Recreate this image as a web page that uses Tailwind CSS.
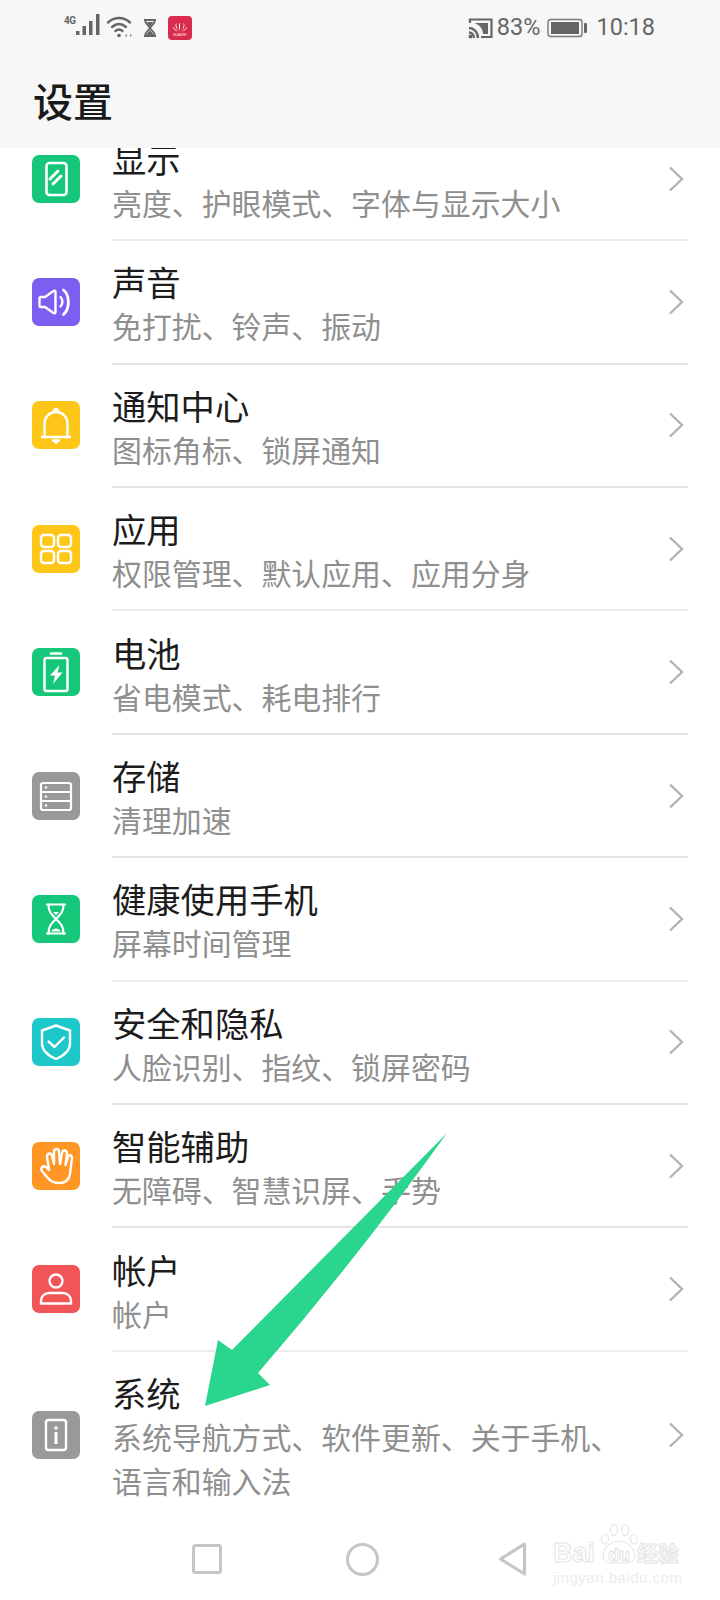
<!DOCTYPE html>
<html lang="zh-CN">
<head>
<meta charset="utf-8">
<script src="https://cdn.jsdelivr.net/npm/@tailwindcss/browser@4"></script>
</head>
<body class="bg-white">
<div class="relative w-[720px] h-[1600px] flex flex-col overflow-hidden bg-white font-['Noto_Sans_CJK_SC','Noto_Sans',sans-serif] text-[#1c1c1c]">

  <header class="relative z-10 h-[148px] shrink-0 bg-[#f7f7f7] flex flex-col">
    <div class="h-[54px] flex items-center pl-[64px] pr-[65px] pt-[1px] text-[#666]">
      <span class="font-['Roboto'] font-bold text-[11px] leading-none mb-[15px] w-[13px] tracking-[-0.5px] scale-x-90 origin-left">4G</span>
      <svg class="w-[24px] h-[24px] -ml-[1px] -mt-[3px]" viewBox="0 0 24 24" fill="#666"><rect x="0" y="17" width="3.500" height="4"/><rect x="6.500" y="12" width="3.500" height="9"/><rect x="13" y="7" width="3.500" height="14"/><rect x="20" y="0" width="3.500" height="21"/></svg>
      <svg class="w-[28px] h-[24px] ml-[6px] -mt-[1px]" viewBox="0 0 28 24" fill="none" stroke="#666" stroke-width="2.400" stroke-linecap="round"><path d="M2 7.500c6.500-6 15.500-6 22 0"/><path d="M6 12c4.500-4 9.500-4 14 0"/><path d="M9.500 16c2.500-2 4.500-2 7 0"/><circle cx="13" cy="20.500" r="1.800" fill="#666" stroke="none"/><path d="M19 20.500l2-1.500v3zM24 19l2 1.500-2 1.500z" fill="#888" stroke="none"/></svg>
      <svg class="w-[14px] h-[18px] ml-[9px]" viewBox="0 0 14 18" fill="none" stroke="#666" stroke-width="1.800"><path d="M1 1h12M1 17h12"/><path d="M2.500 1.500v2L11.500 14.500v2M11.500 1.500v2L2.500 14.500v2"/><path d="M3.500 3h7L7 8zM7 11l-4 5h8z" fill="#666" stroke="none"/></svg>
      <div class="w-[24px] h-[24px] ml-[11px] rounded-[4px] bg-[#d92b4c] flex items-center justify-center">
        <svg class="w-[24px] h-[24px]" viewBox="0 0 24 24" fill="#fff"><path d="M12 15V6.500c-1.500 1.500-1.500 5 0 8.500zM11 15C8.500 13 8 9 8.500 7c-1.500 1-1.500 5 2.500 8zM13 15c2.500-2 3-6 2.500-8 1.500 1 1.500 5-2.500 8zM10.500 15.500C8 15 6 12.500 5.500 10.500c-.8 1.800 1.500 4.800 5 5zM13.500 15.500c2.500-.5 4.500-3 5-5 .8 1.800-1.500 4.800-5 5z"/><text x="12" y="20" text-anchor="middle" font-size="3" font-family="Liberation Sans" letter-spacing=".3">HUAWEI</text></svg>
      </div>
      <div class="flex-1"></div>
      <svg class="w-[25px] h-[22px]" viewBox="0 0 25 22" fill="none" stroke="#666" stroke-width="2.200"><path d="M2 6V2.500h21.500V20H13"/><path d="M1 11c4.500 0 9 4 9 10M1 15.500c3 0 5 2.500 5 5.500" stroke-width="2.400"/><circle cx="2.500" cy="19.500" r="2" fill="#666" stroke="none"/><path d="M6 6h14v11h-5c0-5-4-10-9-11z" fill="#666" stroke="none"/></svg>
      <span class="font-['Roboto'] text-[23.500px] leading-none ml-[4px]">83%</span>
      <svg class="w-[41px] h-[20px] ml-[7px]" viewBox="0 0 41 20" fill="none"><rect x="1" y="1.500" width="34" height="17" rx="2.500" stroke="#777" stroke-width="1.400"/><rect x="4" y="4" width="28" height="12" fill="#666"/><rect x="37" y="5" width="3" height="10" rx="1" fill="#666"/></svg>
      <span class="font-['Roboto'] text-[23.500px] leading-none ml-[8px]">10:18</span>
    </div>
    <h1 class="mt-[20px] pl-[33px] text-[40px] leading-[52px] font-medium text-[#1a1a1a]">设置</h1>
  </header>

  <main class="flex-1 min-h-0 flex flex-col">
    <div class="-mt-[30.1px] h-[123.4px] shrink-0 flex items-stretch pl-[32px]">
      <div class="w-[48px] self-center mt-[-2px] shrink-0 h-[48px] rounded-[7px] bg-[#16c77a] flex items-center justify-center">
        <svg class="w-[48px] h-[48px]" viewBox="0 0 48 48" fill="none" stroke="#fff" stroke-width="2.600" stroke-linecap="round"><rect x="14.500" y="8" width="20" height="32" rx="3"/><path d="M18 24l8-8M21 29l8-8" stroke-width="3"/></svg>
      </div>
      <div class="ml-[32px] mr-[32px] flex-1 border-b-2 border-[#ececec] flex items-center justify-between">
        <div class="pt-[3px]"><div class="text-[34.300px] leading-[44px]">显示</div><div class="text-[29.900px] leading-[44px] text-[#8f8f8f]">亮度、护眼模式、字体与显示大小</div></div>
        <svg class="w-[16px] h-[26px] mr-[4px]" viewBox="0 0 16 26" fill="none" stroke="#b3b3b3" stroke-width="2.400"><path d="M2 1.500l12 11.500-12 11.500"/></svg>
      </div>
    </div>

    <div class="h-[123.4px] shrink-0 flex items-stretch pl-[32px]">
      <div class="w-[48px] self-center mt-[-2px] shrink-0 h-[48px] rounded-[7px] bg-[#7b5ff0] flex items-center justify-center">
        <svg class="w-[48px] h-[48px]" viewBox="0 0 48 48" fill="none" stroke="#fff" stroke-width="2.400" stroke-linecap="round" stroke-linejoin="round"><path d="M7.500 20.500c0-1 .5-1.500 1.500-1.500h4l8.500-6c1-.5 2-.2 2 1v20c0 1.200-1 1.500-2 1l-8.500-6H9c-1 0-1.500-.5-1.500-1.500z"/><path d="M28.500 19c2.500 2.500 2.500 7 0 9.500"/><path d="M31.500 12c6.500 5 6.500 19 0 24.500" stroke-width="2.800"/></svg>
      </div>
      <div class="ml-[32px] mr-[32px] flex-1 border-b-2 border-[#e4e4e4] flex items-center justify-between">
        <div class="pt-[3px]"><div class="text-[34.300px] leading-[44px]">声音</div><div class="text-[29.900px] leading-[44px] text-[#8f8f8f]">免打扰、铃声、振动</div></div>
        <svg class="w-[16px] h-[26px] mr-[4px]" viewBox="0 0 16 26" fill="none" stroke="#b3b3b3" stroke-width="2.400"><path d="M2 1.500l12 11.500-12 11.500"/></svg>
      </div>
    </div>

    <div class="h-[123.4px] shrink-0 flex items-stretch pl-[32px]">
      <div class="w-[48px] self-center mt-[-2px] shrink-0 h-[48px] rounded-[7px] bg-[#ffc61a] flex items-center justify-center">
        <svg class="w-[48px] h-[48px]" viewBox="0 0 48 48" fill="none" stroke="#fff" stroke-width="2.400" stroke-linecap="round" stroke-linejoin="round"><path d="M10 36h28"/><path d="M12.500 36V23c0-7 5-12 11.500-12s11.500 5 11.500 12v13"/><circle cx="24" cy="9.500" r="1.500" fill="#fff"/><path d="M21 39.500h6l-3 2z" fill="#fff"/></svg>
      </div>
      <div class="ml-[32px] mr-[32px] flex-1 border-b-2 border-[#e4e4e4] flex items-center justify-between">
        <div class="pt-[3px]"><div class="text-[34.300px] leading-[44px]">通知中心</div><div class="text-[29.900px] leading-[44px] text-[#8f8f8f]">图标角标、锁屏通知</div></div>
        <svg class="w-[16px] h-[26px] mr-[4px]" viewBox="0 0 16 26" fill="none" stroke="#b3b3b3" stroke-width="2.400"><path d="M2 1.500l12 11.500-12 11.500"/></svg>
      </div>
    </div>

    <div class="h-[123.4px] shrink-0 flex items-stretch pl-[32px]">
      <div class="w-[48px] self-center mt-[-2px] shrink-0 h-[48px] rounded-[7px] bg-[#ffc61a] flex items-center justify-center">
        <svg class="w-[48px] h-[48px]" viewBox="0 0 48 48" fill="none" stroke="#fff" stroke-width="2.400"><rect x="9" y="10" width="13" height="12" rx="3"/><rect x="26" y="10" width="13" height="12" rx="3"/><rect x="9" y="26" width="13" height="12" rx="3"/><rect x="26" y="26" width="13" height="12" rx="3"/></svg>
      </div>
      <div class="ml-[32px] mr-[32px] flex-1 border-b-2 border-[#ececec] flex items-center justify-between">
        <div class="pt-[3px]"><div class="text-[34.300px] leading-[44px]">应用</div><div class="text-[29.900px] leading-[44px] text-[#8f8f8f]">权限管理、默认应用、应用分身</div></div>
        <svg class="w-[16px] h-[26px] mr-[4px]" viewBox="0 0 16 26" fill="none" stroke="#b3b3b3" stroke-width="2.400"><path d="M2 1.500l12 11.500-12 11.500"/></svg>
      </div>
    </div>

    <div class="h-[123.4px] shrink-0 flex items-stretch pl-[32px]">
      <div class="w-[48px] self-center mt-[-2px] shrink-0 h-[48px] rounded-[7px] bg-[#16c77a] flex items-center justify-center">
        <svg class="w-[48px] h-[48px]" viewBox="0 0 48 48" fill="none" stroke="#fff" stroke-width="2.400" stroke-linejoin="round"><rect x="12.500" y="10" width="23" height="33" rx="2"/><path d="M19 5.500h10" stroke-width="2.600" stroke-linecap="round"/><path d="M27.500 17L18 27.500h5l-2 8.500 9.500-11.500h-5z" fill="#fff" stroke="none"/></svg>
      </div>
      <div class="ml-[32px] mr-[32px] flex-1 border-b-2 border-[#e4e4e4] flex items-center justify-between">
        <div class="pt-[3px]"><div class="text-[34.300px] leading-[44px]">电池</div><div class="text-[29.900px] leading-[44px] text-[#8f8f8f]">省电模式、耗电排行</div></div>
        <svg class="w-[16px] h-[26px] mr-[4px]" viewBox="0 0 16 26" fill="none" stroke="#b3b3b3" stroke-width="2.400"><path d="M2 1.500l12 11.500-12 11.500"/></svg>
      </div>
    </div>

    <div class="h-[123.4px] shrink-0 flex items-stretch pl-[32px]">
      <div class="w-[48px] self-center mt-[-2px] shrink-0 h-[48px] rounded-[7px] bg-[#999] flex items-center justify-center">
        <svg class="w-[48px] h-[48px]" viewBox="0 0 48 48" fill="none" stroke="#fff" stroke-width="2.200"><rect x="9" y="11" width="30" height="27" rx="2"/><path d="M9 20h30M9 29h30"/><circle cx="14" cy="15.500" r="1.200" fill="#fff" stroke="none"/><circle cx="14" cy="24.500" r="1.200" fill="#fff" stroke="none"/><circle cx="14" cy="33.500" r="1.200" fill="#fff" stroke="none"/></svg>
      </div>
      <div class="ml-[32px] mr-[32px] flex-1 border-b-2 border-[#e4e4e4] flex items-center justify-between">
        <div class="pt-[3px]"><div class="text-[34.300px] leading-[44px]">存储</div><div class="text-[29.900px] leading-[44px] text-[#8f8f8f]">清理加速</div></div>
        <svg class="w-[16px] h-[26px] mr-[4px]" viewBox="0 0 16 26" fill="none" stroke="#b3b3b3" stroke-width="2.400"><path d="M2 1.500l12 11.500-12 11.500"/></svg>
      </div>
    </div>

    <div class="h-[123.4px] shrink-0 flex items-stretch pl-[32px]">
      <div class="w-[48px] self-center mt-[-2px] shrink-0 h-[48px] rounded-[7px] bg-[#16c77a] flex items-center justify-center">
        <svg class="w-[48px] h-[48px]" viewBox="0 0 48 48" fill="none" stroke="#fff" stroke-width="2.200" stroke-linecap="round" stroke-linejoin="round"><path d="M15 9.500h18M15 38.500h18"/><path d="M16.500 9.500c0 7 2 9 7.500 14.500 5.500 5.500 7.500 7.500 7.500 14.500M31.500 9.500c0 7-2 9-7.500 14.500-5.500 5.500-7.500 7.500-7.500 14.500"/><path d="M21 17h6l-3 3zM19 36.500c1.500-2 3-3 5-3s3.500 1 5 3z" fill="#fff" stroke="none"/></svg>
      </div>
      <div class="ml-[32px] mr-[32px] flex-1 border-b-2 border-[#ececec] flex items-center justify-between">
        <div class="pt-[3px]"><div class="text-[34.300px] leading-[44px]">健康使用手机</div><div class="text-[29.900px] leading-[44px] text-[#8f8f8f]">屏幕时间管理</div></div>
        <svg class="w-[16px] h-[26px] mr-[4px]" viewBox="0 0 16 26" fill="none" stroke="#b3b3b3" stroke-width="2.400"><path d="M2 1.500l12 11.500-12 11.500"/></svg>
      </div>
    </div>

    <div class="h-[123.4px] shrink-0 flex items-stretch pl-[32px]">
      <div class="w-[48px] self-center mt-[-2px] shrink-0 h-[48px] rounded-[7px] bg-[#1ec8c8] flex items-center justify-center">
        <svg class="w-[48px] h-[48px]" viewBox="0 0 48 48" fill="none" stroke="#fff" stroke-width="2.400" stroke-linecap="round" stroke-linejoin="round"><path d="M24 7.500l14 5v13c0 7-6 12-14 15.500-8-3.500-14-8.500-14-15.500v-13z"/><path d="M16.500 23.500l6 5.500 9.500-9.500"/></svg>
      </div>
      <div class="ml-[32px] mr-[32px] flex-1 border-b-2 border-[#e4e4e4] flex items-center justify-between">
        <div class="pt-[3px]"><div class="text-[34.300px] leading-[44px]">安全和隐私</div><div class="text-[29.900px] leading-[44px] text-[#8f8f8f]">人脸识别、指纹、锁屏密码</div></div>
        <svg class="w-[16px] h-[26px] mr-[4px]" viewBox="0 0 16 26" fill="none" stroke="#b3b3b3" stroke-width="2.400"><path d="M2 1.500l12 11.500-12 11.500"/></svg>
      </div>
    </div>

    <div class="h-[123.4px] shrink-0 flex items-stretch pl-[32px]">
      <div class="w-[48px] self-center mt-[-2px] shrink-0 h-[48px] rounded-[7px] bg-[#ff9626] flex items-center justify-center">
        <svg class="w-[48px] h-[48px]" viewBox="0 0 48 48" fill="none" stroke="#fff" stroke-width="2.400" stroke-linecap="round" stroke-linejoin="round"><path d="M10 29C8 26 11 23 14 25L17 28L15 15C15 11 19 10 20 14L22 22L22 10C22 6 27 6 27 10L28 22L30 11C31 7 35 8 35 12L33.500 23L36 15C37 12 40 13 40 16L38 32C37 38 33 41 27 41C21 41 18 39 15 35Z"/></svg>
      </div>
      <div class="ml-[32px] mr-[32px] flex-1 border-b-2 border-[#e4e4e4] flex items-center justify-between">
        <div class="pt-[3px]"><div class="text-[34.300px] leading-[44px]">智能辅助</div><div class="text-[29.900px] leading-[44px] text-[#8f8f8f]">无障碍、智慧识屏、手势</div></div>
        <svg class="w-[16px] h-[26px] mr-[4px]" viewBox="0 0 16 26" fill="none" stroke="#b3b3b3" stroke-width="2.400"><path d="M2 1.500l12 11.500-12 11.500"/></svg>
      </div>
    </div>

    <div class="h-[123.4px] shrink-0 flex items-stretch pl-[32px]">
      <div class="w-[48px] self-center mt-[-2px] shrink-0 h-[48px] rounded-[7px] bg-[#f25558] flex items-center justify-center">
        <svg class="w-[48px] h-[48px]" viewBox="0 0 48 48" fill="none" stroke="#fff" stroke-width="2.400" stroke-linejoin="round"><circle cx="24" cy="16" r="6.500"/><path d="M9 38.500v-3c0-4 3.500-7.500 8-7.500h14c4.500 0 8 3.500 8 7.500v3z"/></svg>
      </div>
      <div class="ml-[32px] mr-[32px] flex-1 border-b-2 border-[#ececec] flex items-center justify-between">
        <div class="pt-[3px]"><div class="text-[34.300px] leading-[44px]">帐户</div><div class="text-[29.900px] leading-[44px] text-[#8f8f8f]">帐户</div></div>
        <svg class="w-[16px] h-[26px] mr-[4px]" viewBox="0 0 16 26" fill="none" stroke="#b3b3b3" stroke-width="2.400"><path d="M2 1.500l12 11.500-12 11.500"/></svg>
      </div>
    </div>

    <div class="h-[166px] shrink-0 flex items-stretch pl-[32px]">
      <div class="w-[48px] self-center shrink-0 h-[48px] rounded-[7px] bg-[#999] flex items-center justify-center">
        <svg class="w-[48px] h-[48px]" viewBox="0 0 48 48" fill="none" stroke="#fff" stroke-width="2.400"><rect x="14" y="9" width="20" height="30" rx="2.500"/><rect x="22.500" y="15.500" width="3" height="3" fill="#fff" stroke="none"/><rect x="22.500" y="21" width="3" height="12" fill="#fff" stroke="none"/></svg>
      </div>
      <div class="ml-[32px] mr-[32px] flex-1 flex items-center justify-between">
        <div class="pt-[2px] w-[520px]"><div class="text-[34.300px] leading-[44px]">系统</div><div class="text-[29.900px] leading-[44px] text-[#8f8f8f]">系统导航方式、软件更新、关于手机、语言和输入法</div></div>
        <svg class="w-[16px] h-[26px] mr-[4px] shrink-0" viewBox="0 0 16 26" fill="none" stroke="#b3b3b3" stroke-width="2.400"><path d="M2 1.500l12 11.500-12 11.500"/></svg>
      </div>
    </div>
  </main>

  <nav class="h-[84px] shrink-0 flex items-start pt-[28px] pl-[192px]">
    <svg class="w-[30px] h-[30px]" viewBox="0 0 30 30" fill="none" stroke="#c6c6c6" stroke-width="3"><rect x="1.500" y="1.500" width="27" height="27" rx="2"/></svg>
    <svg class="w-[33px] h-[33px] ml-[124px] -mt-[1px]" viewBox="0 0 33 33" fill="none" stroke="#c6c6c6" stroke-width="3"><circle cx="16.500" cy="16.500" r="15"/></svg>
    <svg class="w-[29px] h-[34px] ml-[119px] -mt-[2px]" viewBox="0 0 29 34" fill="none" stroke="#c6c6c6" stroke-width="3.200" stroke-linejoin="round"><path d="M26.500 2L2.500 17l24 15z"/></svg>
  </nav>

  <svg class="absolute left-0 top-0 w-[720px] h-[1600px] z-20 pointer-events-none" viewBox="0 0 720 1600"><path d="M447 1133L232 1350L218 1340L205 1406L270 1385L258 1373Q360 1255 447 1133Z" fill="#2ad58e"/></svg>

  <div class="absolute left-[553px] top-[1523px] w-[130px] h-[72px] z-20 pointer-events-none">
    <svg class="absolute left-[46px] top-0 w-[40px] h-[42px]" viewBox="0 0 40 42" fill="none" stroke="#e6e6e6" stroke-width="1.200"><ellipse cx="6" cy="16" rx="3.500" ry="5"/><ellipse cx="15" cy="7" rx="3.500" ry="5.500"/><ellipse cx="26" cy="7" rx="3.500" ry="5.500"/><ellipse cx="35" cy="16" rx="3.500" ry="5"/><path d="M4 33c0-9 9-15 16-15s16 6 16 15c0 5-4 7-8 7H12c-4 0-8-2-8-7z"/></svg>
    <div class="absolute left-0 top-[15px] font-['Liberation_Sans'] font-bold text-transparent [-webkit-text-stroke:1px_#e4e4e4] text-[27px] leading-[30px]">Bai</div>
    <div class="absolute left-[55px] top-[22px] font-['Liberation_Sans'] font-bold text-transparent [-webkit-text-stroke:1px_#e4e4e4] text-[18px] leading-[20px]">du</div>
    <div class="absolute left-[84px] top-[16px] font-['Noto_Sans_CJK_SC'] font-bold text-transparent [-webkit-text-stroke:1px_#e4e4e4] text-[21px] leading-[26px]">经验</div>
    <div class="absolute left-0 top-[46px] font-['Liberation_Sans'] text-[15px] leading-[18px] text-[#ececec] whitespace-nowrap tracking-[0.5px]">jingyan.baidu.com</div>
  </div>
</div>
</body>
</html>
